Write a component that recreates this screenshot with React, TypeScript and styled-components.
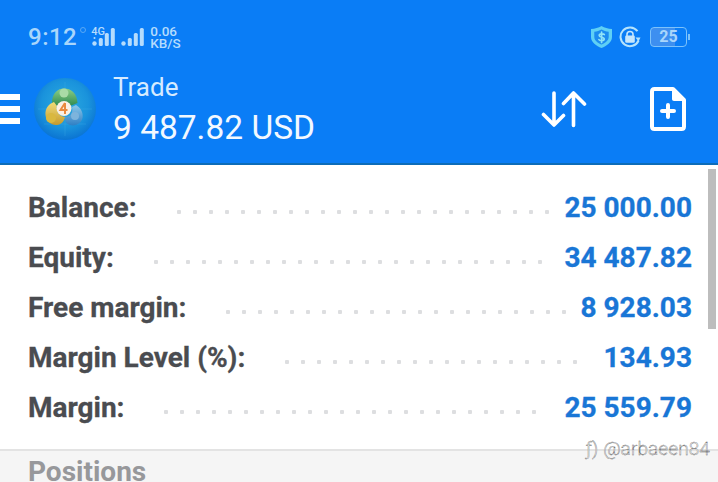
import React from "react";
import styled, { createGlobalStyle } from "styled-components";

const GlobalStyle = createGlobalStyle`
  html, body {
    margin: 0;
    padding: 0;
    background: #fff;
  }
  body {
    font-family: Roboto, "Liberation Sans", sans-serif;
  }
`;

const rows = [
  { label: "Balance:", value: "25 000.00" },
  { label: "Equity:", value: "34 487.82" },
  { label: "Free margin:", value: "8 928.03" },
  { label: "Margin Level (%):", value: "134.93" },
  { label: "Margin:", value: "25 559.79" },
];

// more than any row can hold, the ones that don't fit wrap out of sight
const dotSlots = Array.from({ length: 40 }, (_, i) => i);

const SignalBars = ({ dots }: { dots: number }) => (
  <svg width="23" height="18" viewBox="0 0 23 18">
    <circle cx="2.5" cy="15.5" r="2.2" fill="#b5dcfd" />
    <rect x="6.8" y="10" width="4" height="8" rx="1.5" fill="#b5dcfd" />
    <rect x="12.8" y="5" width="4" height="13" rx="1.5" fill="#b5dcfd" />
    <rect x="18.8" y="0" width="4" height="18" rx="1.5" fill="#b5dcfd" />
    {dots > 0 && <circle cx="2.5" cy="10" r="1" fill="#b5dcfd" />}
  </svg>
);

const ShieldIcon = () => (
  <svg width="23" height="24" viewBox="0 0 23 24">
    <path
      d="M11.5 1 C14.5 2.8 18 3.8 22 4 V12 C22 17.5 16.5 21 11.5 23 C6.5 21 1 17.5 1 12 V4 C5 3.8 8.5 2.8 11.5 1 Z"
      fill="#5fd0f5"
    />
    <path
      d="M11.5 4.6 C13.6 5.8 16 6.5 18.7 6.8 V12 C18.7 15.5 15 18 11.5 19.6 C8 18 4.3 15.5 4.3 12 V6.8 C7 6.5 9.4 5.8 11.5 4.6 Z"
      fill="#1c8cf0"
    />
    <path
      d="M14.3 9.6 C13.6 8.6 9.2 8.3 9.2 10.6 C9.2 12.9 14.2 11.6 14.2 14 C14.2 16.2 9.8 16 8.9 14.6 M11.6 7.2 V17.4"
      fill="none"
      stroke="#8fe3f7"
      strokeWidth="1.7"
      strokeLinecap="round"
    />
  </svg>
);

const LockIcon = () => (
  <svg width="22" height="22" viewBox="0 0 22 22">
    <path
      d="M19.6 14.5 A9.4 9.4 0 1 1 18.5 5.2"
      fill="none"
      stroke="#b5e3fc"
      strokeWidth="2"
    />
    <path d="M21.5 11.5 L16.5 11.5 L19.5 15.5 Z" fill="#b5e3fc" />
    <path
      d="M8 10 V8.2 C8 4.6 14 4.6 14 8.2 V10"
      fill="none"
      stroke="#c6e6fc"
      strokeWidth="1.6"
    />
    <rect x="6.2" y="9.6" width="9.6" height="7.2" rx="1.2" fill="#c6e6fc" />
  </svg>
);

const SwapIcon = () => (
  <svg width="46" height="38" viewBox="0 0 46 38" fill="none">
    <path
      d="M13 3 V34.5 M2.5 24.5 L13 35 L22.5 25.5"
      stroke="#fff"
      strokeWidth="3.6"
      strokeLinecap="round"
      strokeLinejoin="round"
    />
    <path
      d="M32.5 35.5 V3.5 M22.5 13.5 L32.5 3 L43.5 14"
      stroke="#fff"
      strokeWidth="3.6"
      strokeLinecap="round"
      strokeLinejoin="round"
    />
  </svg>
);

const NewOrderIcon = () => (
  <svg width="36" height="44" viewBox="0 0 36 44" fill="none">
    <path
      d="M4.5 2 H23 L34 13 V39.5 C34 41 33 42 31.5 42 H4.5 C3 42 2 41 2 39.5 V4.5 C2 3 3 2 4.5 2 Z"
      stroke="#fff"
      strokeWidth="4"
      strokeLinejoin="round"
    />
    <path d="M22 1 L35 14 H24 C22.8 14 22 13.2 22 12 Z" fill="#fff" />
    <path
      d="M18 18 V30 M12 24 H24"
      stroke="#fff"
      strokeWidth="4"
      strokeLinecap="round"
    />
  </svg>
);

const TerminalLogo = () => (
  <svg width="62" height="62" viewBox="0 0 62 62">
    <defs>
      <radialGradient id="disc" cx="50%" cy="42%" r="58%">
        <stop offset="0%" stopColor="#2cabdf" />
        <stop offset="65%" stopColor="#1a93dc" />
        <stop offset="100%" stopColor="#0b74d2" />
      </radialGradient>
      <linearGradient id="leafGreen" x1="0" y1="0" x2="0" y2="1">
        <stop offset="0%" stopColor="#8ccf86" />
        <stop offset="100%" stopColor="#2f8a50" />
      </linearGradient>
      <linearGradient id="leafGold" x1="0" y1="0" x2="0" y2="1">
        <stop offset="0%" stopColor="#f0dc78" />
        <stop offset="100%" stopColor="#c59a2c" />
      </linearGradient>
      <linearGradient id="leafBlue" x1="0" y1="0" x2="0" y2="1">
        <stop offset="0%" stopColor="#8cc8ea" />
        <stop offset="100%" stopColor="#2f7fc4" />
      </linearGradient>
    </defs>
    <circle cx="31" cy="31" r="31" fill="url(#disc)" />
    <path d="M4 31 H58 M31 4 V58 M10 46 H52" stroke="#4fb7e8" strokeWidth="0.5" opacity="0.5" />
    <path
      d="M18 25 C18 15 24 10.5 30 10.5 C37 10.5 43 15 43.5 25 L36 28 C35 24 25 24 23.5 28 Z"
      fill="url(#leafGreen)"
    />
    <circle cx="30" cy="15" r="4.5" fill="#a9dba6" />
    <path
      d="M20 24 C14 26 11 31 11.5 37 C12 43 17 47.5 23 47 C27 46.5 30 44 31 39 C25 38.5 21.5 32 23 28 Z"
      fill="url(#leafGold)"
    />
    <circle cx="17" cy="40" r="5" fill="#d9b83f" />
    <path
      d="M42 27 C47 30 49.5 35 48.5 40 C47 46 41 48.5 36 47 C33 46 30.5 43.5 31 39 C36 39 39.5 35 38 29 Z"
      fill="url(#leafBlue)"
    />
    <circle cx="41" cy="38" r="4" fill="#7db4dc" />
    <circle cx="30" cy="30.5" r="7.5" fill="#fbf0e4" />
    <path
      d="M31 25 L26.5 32 H33.5 M31 25 V36"
      fill="none"
      stroke="#ea8a3e"
      strokeWidth="2"
    />
  </svg>
);

export default function App() {
  return (
    <>
      <GlobalStyle />
      <Screen>
        <Header>
          <StatusBar>
            <StatusGroup>
              <Clock>9:12</Clock>
              <NetworkBadge>
                <NetworkLabel>4G</NetworkLabel>
                <SignalBars dots={1} />
              </NetworkBadge>
              <SignalBars dots={0} />
              <Speed>
                <span>0.06</span>
                <span>KB/S</span>
              </Speed>
            </StatusGroup>
            <StatusGroup>
              <ShieldIcon />
              <LockIcon />
              <Battery>
                <BatteryBody>25</BatteryBody>
                <BatteryTip />
              </Battery>
            </StatusGroup>
          </StatusBar>
          <Toolbar>
            <Burger>
              <i />
              <i />
              <i />
            </Burger>
            <LogoSlot>
              <TerminalLogo />
            </LogoSlot>
            <TitleBlock>
              <Title>Trade</Title>
              <Subtitle>9 487.82 USD</Subtitle>
            </TitleBlock>
            <Actions>
              <SwapIcon />
              <NewOrderIcon />
            </Actions>
          </Toolbar>
        </Header>
        <Content>
          <Summary>
            {rows.map((row) => (
              <Row key={row.label}>
                <Label>{row.label}</Label>
                <Dots>
                  {dotSlots.map((i) => (
                    <Dot key={i} />
                  ))}
                </Dots>
                <Value>{row.value}</Value>
              </Row>
            ))}
          </Summary>
          <SectionBar>
            <SectionTitle>Positions</SectionTitle>
          </SectionBar>
          <Scrollbar />
          <Watermark>ƒ) @arbaeen84</Watermark>
        </Content>
      </Screen>
    </>
  );
}

const Screen = styled.div`
  width: 718px;
  height: 482px;
  overflow: hidden;
  display: flex;
  flex-direction: column;
`;

const Header = styled.header`
  height: 163px;
  flex: none;
  background: #0a7df6;
  border-bottom: 2px solid #0d6cb8;
  display: flex;
  flex-direction: column;
`;

const StatusBar = styled.div`
  height: 74px;
  flex: none;
  padding: 0 28px 0 28px;
  display: flex;
  align-items: center;
  justify-content: space-between;
`;

const StatusGroup = styled.div`
  display: flex;
  align-items: center;
  gap: 6px;
`;

const Clock = styled.span`
  color: #a9d6fb;
  font-size: 24px;
  font-weight: 500;
  letter-spacing: 0.5px;
  margin-right: 6px;
`;

const NetworkBadge = styled.div`
  display: flex;
  align-items: flex-start;
  position: relative;
  padding-left: 3px;

  &::before {
    content: "";
    position: absolute;
    left: -9px;
    top: -1px;
    width: 6px;
    height: 6px;
    border-radius: 50%;
    border: 1px solid #5aa9f5;
    box-sizing: border-box;
  }
`;

const NetworkLabel = styled.span`
  position: absolute;
  left: 2px;
  top: -3px;
  color: #b5dcfd;
  font-size: 11px;
  font-weight: 500;
`;

const Speed = styled.div`
  display: flex;
  flex-direction: column;
  color: #b5dcfd;
  font-size: 13.5px;
  font-weight: 500;
  line-height: 12.5px;
`;

const Battery = styled.div`
  display: flex;
  align-items: center;
  margin-left: 3px;
`;

const BatteryBody = styled.div`
  width: 37px;
  height: 20px;
  box-sizing: border-box;
  border: 1px solid #7cc2fb;
  border-radius: 4px;
  background: linear-gradient(90deg, #3d8ff0 70%, #0a7df6 70%);
  color: #a9d6fb;
  font-size: 16px;
  font-weight: 700;
  line-height: 18px;
  text-align: center;
`;

const BatteryTip = styled.div`
  width: 2px;
  height: 6px;
  margin-left: 1px;
  background: #7cc2fb;
`;

const Toolbar = styled.div`
  flex: 1;
  display: flex;
  align-items: center;
  padding-bottom: 19px;
  min-height: 0;
`;

const Burger = styled.div`
  width: 20px;
  display: flex;
  flex-direction: column;
  gap: 6px;

  i {
    display: block;
    height: 6px;
    background: #fff;
  }
`;

const LogoSlot = styled.div`
  width: 62px;
  height: 62px;
  margin-left: 14px;
`;

const TitleBlock = styled.div`
  margin-left: 17px;
  padding-top: 4px;
  display: flex;
  flex-direction: column;
  gap: 4px;
`;

const Title = styled.div`
  color: #d6ebff;
  font-size: 26px;
  line-height: 30px;
`;

const Subtitle = styled.div`
  color: #f2f8ff;
  font-size: 33.5px;
  line-height: 44px;
  white-space: nowrap;
`;

const Actions = styled.div`
  margin-left: auto;
  padding-right: 32px;
  display: flex;
  align-items: center;
  gap: 63px;
`;

const Content = styled.main`
  flex: 1;
  position: relative;
  display: flex;
  flex-direction: column;
  min-height: 0;
`;

const Summary = styled.section`
  height: 284px;
  flex: none;
  box-sizing: border-box;
  padding: 17px 26px 0 28px;
`;

const Row = styled.div`
  height: 50px;
  display: flex;
  align-items: center;
`;

const Label = styled.span`
  color: #4a4c50;
  font-size: 28px;
  font-weight: 700;
  -webkit-text-stroke: 0.3px #4a4c50;
`;

const Dots = styled.span`
  flex: 1;
  height: 4px;
  margin: 9px 14px 0 40px;
  display: flex;
  flex-wrap: wrap;
  gap: 12px;
  overflow: hidden;
`;

const Dot = styled.i`
  width: 4px;
  height: 4px;
  border-radius: 1px;
  background: #dddee0;
`;

const Value = styled.span`
  color: #1976d6;
  font-size: 28px;
  font-weight: 700;
  -webkit-text-stroke: 0.3px #1976d6;
`;

const SectionBar = styled.div`
  flex: 1;
  border-top: 2px solid #e3e3e3;
  background: #f5f5f5;
  padding: 6px 28px 0;
`;

const SectionTitle = styled.div`
  color: #97989b;
  font-size: 28px;
  font-weight: 700;
  line-height: 30px;
`;

const Scrollbar = styled.div`
  position: absolute;
  right: 2px;
  top: 4px;
  width: 8px;
  height: 160px;
  background: #bdbdbd;
`;

const Watermark = styled.div`
  position: absolute;
  right: 8px;
  top: 272px;
  color: #fff;
  font-size: 19px;
  font-weight: 300;
  letter-spacing: 0.1px;
  -webkit-text-stroke: 0.35px #5c5c5c;
`;
